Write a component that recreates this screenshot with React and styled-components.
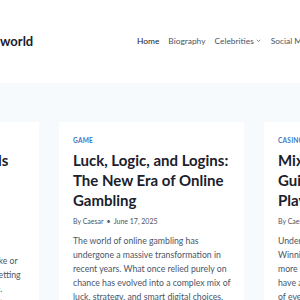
import styled, { createGlobalStyle } from "styled-components";

const GlobalStyle = createGlobalStyle`
  html, body {
    margin: 0;
    padding: 0;
    background: #f7fafc;
    font-family: Lato, "Noto Sans", sans-serif;
    overflow: hidden;
  }
`;

const posts = [
  {
    id: 1,
    category: "SPORTS",
    title: "Celebrities’ Bankrolls Revealed: How the Stars Really Bet on Sports",
    author: "Caesar",
    date: "June 18, 2025",
    excerpt:
      "Every bettor faces choices that make or break a bankroll, long before any betting begins, so learn the odds and more. Responsible play always comes first.",
  },
  {
    id: 2,
    category: "GAME",
    title: "Luck, Logic, and Logins: The New Era of Online Gambling",
    author: "Caesar",
    date: "June 17, 2025",
    excerpt:
      "The world of online gambling has undergone a massive transformation in recent years. What once relied purely on chance has evolved into a complex mix of luck, strategy, and smart digital choices.",
  },
  {
    id: 3,
    category: "CASINO",
    title: "Mix Parlay Betting Guide for Beginner Players",
    author: "Caesar",
    date: "June 16, 2025",
    excerpt:
      "Understanding mix parlay betting is easy. Winning a parlay, however, takes much more than luck. Smart bettors always have a clear plan and know the mechanics of every leg.",
  },
];

function App() {
  return (
    <>
      <GlobalStyle />
      <Header>
        <SiteTitle>world</SiteTitle>
        <Nav>
          <NavItem $active>Home</NavItem>
          <NavItem>Biography</NavItem>
          <NavItem>
            Celebrities
            <Chevron viewBox="0 0 10 10">
              <path d="M2.5 4 L5 6.5 L7.5 4" />
            </Chevron>
          </NavItem>
          <NavItem>Social Media</NavItem>
        </Nav>
      </Header>

      <Main>
        <Grid>
          {posts.map((post) => (
            <Card key={post.id}>
              <Category>{post.category}</Category>
              <Title>{post.title}</Title>
              <Meta>
                By {post.author}
                <Dot>•</Dot>
                {post.date}
              </Meta>
              <Excerpt>{post.excerpt}</Excerpt>
            </Card>
          ))}
        </Grid>
      </Main>
    </>
  );
}

const Header = styled.header`
  height: 83px;
  background: #ffffff;
  display: flex;
  align-items: center;
  white-space: nowrap;
  overflow: hidden;
`;

const SiteTitle = styled.div`
  font-size: 13px;
  font-weight: 700;
  color: #1a202c;
  width: 137px;
  flex-shrink: 0;
  margin-top: -2px;
`;

const Nav = styled.nav`
  display: flex;
  align-items: center;
  gap: 9px;
  margin-top: -2px;
`;

const NavItem = styled.span`
  display: flex;
  align-items: center;
  font-size: 8.4px;
  color: ${({ $active }) => ($active ? "#1a202c" : "#4a5568")};
`;

const Chevron = styled.svg`
  width: 7px;
  height: 7px;
  margin-left: 1px;
  fill: none;
  stroke: #4a5568;
  stroke-width: 1;
`;

const Main = styled.main`
  padding-top: 39px;
  overflow: hidden;
`;

const Grid = styled.div`
  display: flex;
  gap: 20px;
  margin-left: -146px;
  align-items: flex-start;
`;

const Card = styled.article`
  width: 185px;
  flex-shrink: 0;
  background: #ffffff;
  padding: 14px 11px 20px 14px;
  box-sizing: border-box;
`;

const Category = styled.div`
  font-size: 6.5px;
  font-weight: 700;
  letter-spacing: 0.04em;
  color: #3b78c4;
  line-height: 10px;
`;

const Title = styled.h2`
  margin: 4px 0 0;
  font-size: 15px;
  line-height: 20px;
  font-weight: 700;
  color: #1a202c;
`;

const Meta = styled.div`
  margin-top: 6px;
  font-size: 7px;
  color: #4a5568;
  line-height: 10px;
`;

const Dot = styled.span`
  margin: 0 3px;
`;

const Excerpt = styled.p`
  margin: 8px 0 0;
  font-size: 8.7px;
  line-height: 14px;
  color: #4a5568;
`;

export default App;
